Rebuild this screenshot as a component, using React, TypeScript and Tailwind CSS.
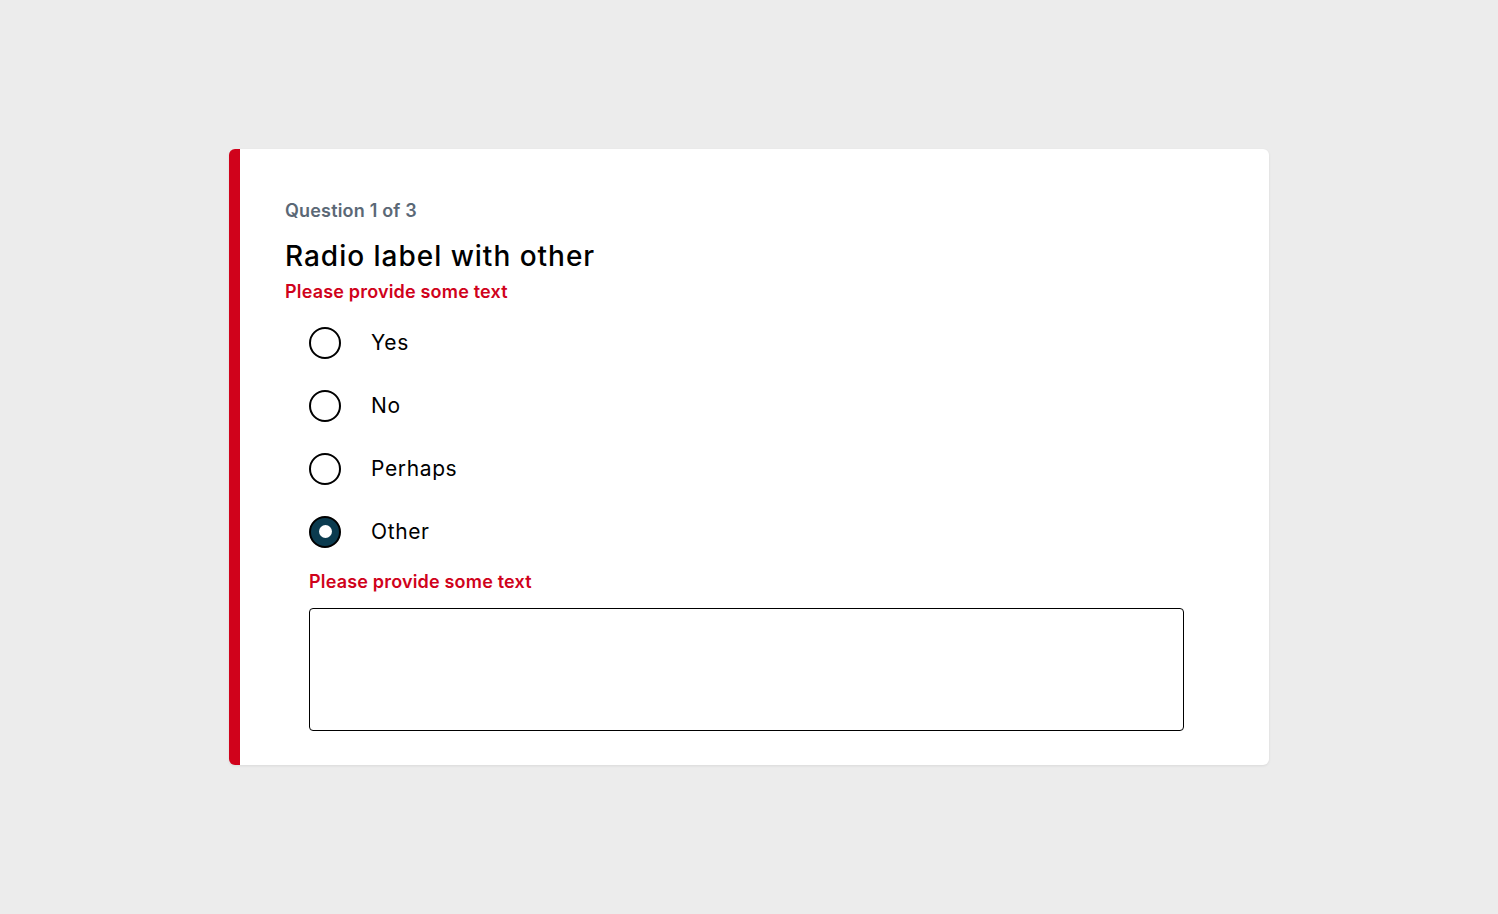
import { useState } from 'react';

const options = ['Yes', 'No', 'Perhaps', 'Other'];

function Radio({ label, checked, onSelect }: { label: string; checked: boolean; onSelect: () => void }) {
  return (
    <label className="flex h-[63px] cursor-pointer items-center gap-[30px]" onClick={onSelect}>
      <span
        className={`flex h-8 w-8 shrink-0 items-center justify-center rounded-full border-2 border-black ${checked ? 'bg-[#0b3b4f]' : 'bg-white'}`}
      >
        {checked && <span className="h-[13px] w-[13px] rounded-full bg-white" />}
      </span>
      <span className="text-[21px] tracking-[0.03em] text-black">{label}</span>
    </label>
  );
}

export default function App() {
  const [value, setValue] = useState('Other');

  return (
    <div className="flex min-h-[914px] w-full items-start justify-center bg-[#ececec] pt-[149px] font-['Inter','Noto_Sans',sans-serif]">
      <div className="w-[1040px] rounded-md border-l-[11px] border-[#d0021b] bg-white pb-[34px] pl-[45px] pr-[85px] pt-[50px] shadow-[0_1px_3px_rgba(0,0,0,0.08)]">
        <p className="text-[18px] font-semibold leading-[24px] tracking-[0.01em] text-[#5b6876]">Question 1 of 3</p>
        <h1 className="mt-[15px] text-[28px] font-medium leading-[36px] tracking-[0.035em] text-black">Radio label with other</h1>
        <p className="mt-[6px] text-[18px] font-semibold leading-[24px] tracking-[0.01em] text-[#d0021b]">Please provide some text</p>

        <div className="ml-[24px] mt-[7px]">
          {options.map((option) => (
            <Radio key={option} label={option} checked={value === option} onSelect={() => setValue(option)} />
          ))}
          <p className="mt-[7px] text-[18px] font-semibold leading-[24px] tracking-[0.01em] text-[#d0021b]">Please provide some text</p>
          <textarea className="mt-[14px] block h-[123px] w-full resize-none rounded-[4px] border border-black p-3 outline-none" />
        </div>
      </div>
    </div>
  );
}
